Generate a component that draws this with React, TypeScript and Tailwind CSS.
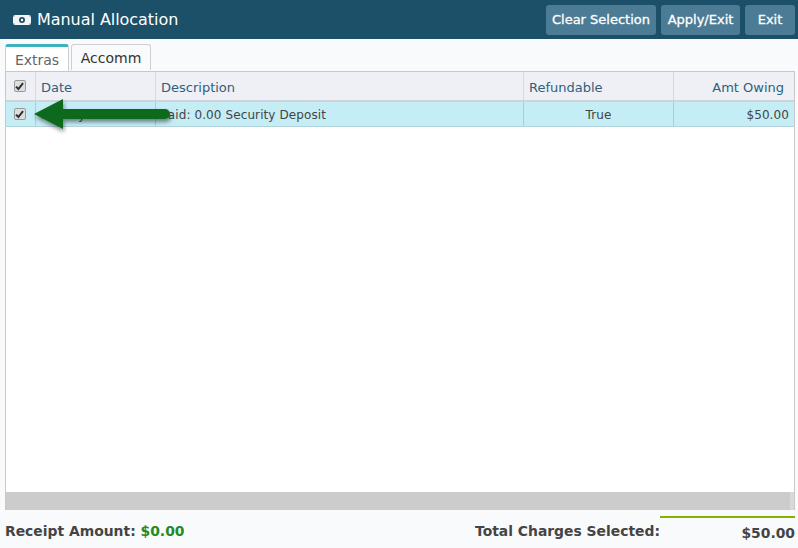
import React from "react";

const font = "font-['DejaVu_Sans',Verdana,sans-serif]";

const Check = () => (
  <span className="mr-[2px] flex h-[12px] w-[12px] items-center justify-center rounded-[2px] border border-[#9a9a9a] bg-[#dedede]">
    <svg width="9" height="9" viewBox="0 0 9 9">
      <path d="M1 4.6 L3.4 7 L8 1.2" fill="none" stroke="#2f2f2f" strokeWidth="2" />
    </svg>
  </span>
);

const TopButton = ({ label, width }: { label: string; width: string }) => (
  <button className={`flex h-[30px] items-center justify-center rounded-[3px] bg-[#4c7c95] text-[13px] text-white [-webkit-text-stroke:0.3px_white] ${width}`}>
    {label}
  </button>
);

export default function App() {
  return (
    <div className={`relative flex h-[548px] w-[798px] flex-col overflow-hidden bg-[#f9fafc] ${font}`}>
      <div className="flex h-[39px] items-center justify-between bg-[#1c4f68] pl-[13px] pr-[3px]">
        <div className="flex items-center gap-[6px] text-[16px] text-white">
          <svg width="18" height="10" viewBox="0 0 18 10">
            <path fillRule="evenodd" fill="#f2f4f6" d="M0 0h18v10H0z M9 2a3 3 0 1 0 0 6a3 3 0 0 0 0-6z" />
            <circle cx="9" cy="5" r="1.2" fill="#fff" />
            <rect x="0" y="0" width="1.5" height="1.5" fill="#5f8397" />
            <rect x="16.5" y="0" width="1.5" height="1.5" fill="#5f8397" />
            <rect x="0" y="8.5" width="1.5" height="1.5" fill="#5f8397" />
            <rect x="16.5" y="8.5" width="1.5" height="1.5" fill="#5f8397" />
          </svg>
          <span className="tracking-[-0.05px]">Manual Allocation</span>
        </div>
        <div className="flex gap-[5px]">
          <TopButton label="Clear Selection" width="w-[110px]" />
          <TopButton label="Apply/Exit" width="w-[79px]" />
          <TopButton label="Exit" width="w-[50px]" />
        </div>
      </div>

      <div className="flex h-[32px] items-end gap-[2px] pl-[5px]">
        <div className="flex h-[27px] w-[64px] items-center justify-center rounded-t-[3px] border-x border-t-[3px] border-x-[#cfcfcf] border-t-[#3fb3bd] bg-white pt-[3px] text-[14px] text-[#666]">
          Extras
        </div>
        <div className="mb-[1px] flex h-[26px] w-[80px] items-center justify-center rounded-t-[3px] border border-b-0 border-[#cfcfcf] bg-[#f9fafc] pt-[2px] text-[14px] text-[#333]">
          Accomm
        </div>
      </div>

      <div className="mx-[5px] flex h-[439px] w-[790px] flex-col border-x border-t border-[#c8c8c8] bg-white">
        <div className="flex h-[30px] border-b-2 border-[#cfd2d6] bg-[#eef0f5] text-[13px] text-[#2f5f7c]">
          <div className="flex w-[30px] items-center justify-center border-r border-[#d6d8dc]"><Check /></div>
          <div className="flex w-[120px] items-center border-r border-[#d6d8dc] pl-[5px] pt-[3px]">Date</div>
          <div className="flex w-[368px] items-center border-r border-[#d6d8dc] pl-[5px] pt-[3px]">Description</div>
          <div className="flex w-[150px] items-center border-r border-[#d6d8dc] pl-[5px] pt-[3px]">Refundable</div>
          <div className="flex flex-1 items-center justify-end pr-[10px] pt-[3px]">Amt Owing</div>
        </div>
        <div className="flex h-[25px] border-b border-[#b2d3da] bg-[#c4edf5] text-[12px] tracking-[0.1px] text-[#444]">
          <div className="flex w-[30px] items-center justify-center border-r border-[#a9cfd6]"><Check /></div>
          <div className="flex w-[120px] items-center border-r border-[#a9cfd6] pl-[5px] pt-[2px]">13 May 2018</div>
          <div className="flex w-[368px] items-center border-r border-[#a9cfd6] pl-[5px] pt-[2px]">Paid: 0.00 Security Deposit</div>
          <div className="flex w-[150px] items-center justify-center border-r border-[#a9cfd6] pt-[2px]">True</div>
          <div className="flex flex-1 items-center justify-end pr-[5px] pt-[2px]">$50.00</div>
        </div>
        <div className="flex-1" />
        <div className="flex h-[18px] justify-end bg-[#cccccc]">
          <div className="w-[4px] bg-[#d9d9d9]" />
        </div>
      </div>

      <div className="flex flex-1 items-start justify-between pl-[5px] pr-[3px] text-[13.9px] font-bold text-[#444]">
        <div className="mt-[11px]">
          Receipt Amount: <span className="text-[#228b22]">$0.00</span>
        </div>
        <div className="flex">
          <div className="mt-[11px]">Total Charges Selected:</div>
          <div className="mt-[6px] h-[30px] w-[135px] border-t-2 border-[#85b200] pt-[5px] text-right">$50.00</div>
        </div>
      </div>

      {/* annotation arrow */}
      <svg className="absolute left-[30px] top-[95px]" width="150" height="45" viewBox="0 0 150 45">
        <defs>
          <filter id="arrowShadow" x="-10%" y="-30%" width="120%" height="170%">
            <feDropShadow dx="1" dy="3" stdDeviation="2" floodColor="#000" floodOpacity="0.45" />
          </filter>
        </defs>
        <path
          d="M4 19 L33 4 V14 H135 a5 5 0 0 1 0 10 H33 V34 Z"
          fill="#116a1d"
          filter="url(#arrowShadow)"
        />
      </svg>
    </div>
  );
}
